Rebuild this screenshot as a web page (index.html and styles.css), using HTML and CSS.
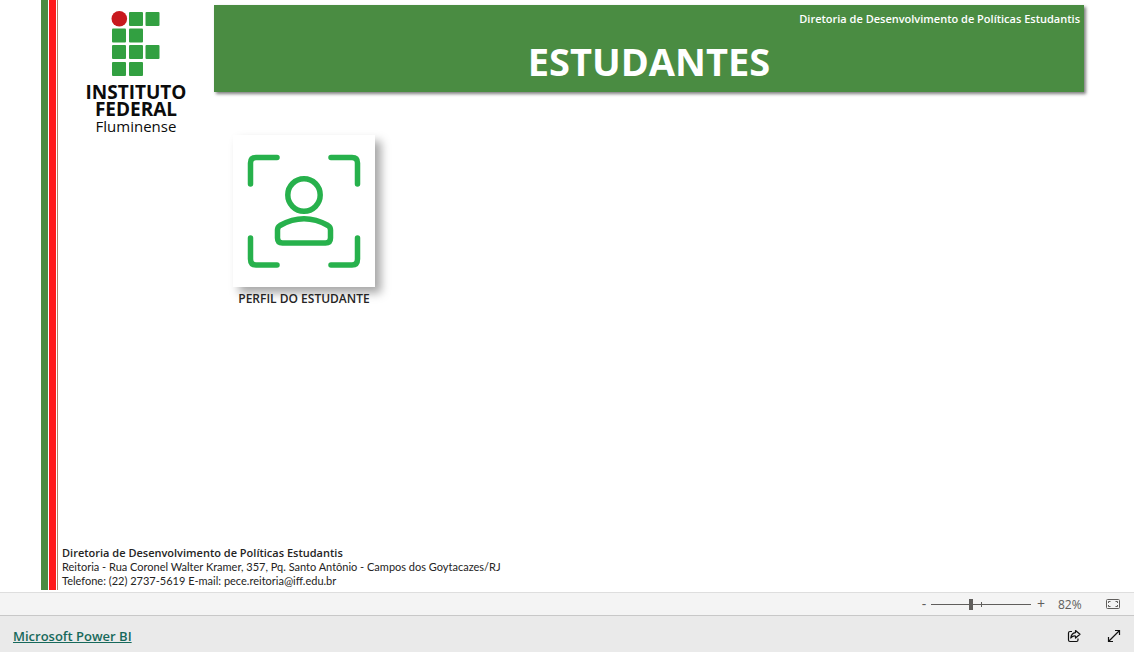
FILE: index.html
```html
<!DOCTYPE html>
<html lang="pt-BR">
<head>
<meta charset="utf-8">
<meta name="viewport" content="width=device-width, initial-scale=1">
<title>Estudantes</title>
<link rel="stylesheet" href="styles.css">
</head>
<body>
<main class="report">
  <div class="stripes"><span class="stripe-green"></span><span class="stripe-red"></span><span class="stripe-thin"></span></div>
  <div class="page">
    <div class="top">
      <div class="brand">
        <svg class="brand-mark" viewBox="0 0 50 67" aria-hidden="true">
          <g fill="#32a041">
            <rect x="18" y="1" width="14" height="14" rx="1"/><rect x="34.500" y="1" width="14" height="14" rx="1"/>
            <rect x="1" y="17.500" width="14" height="14" rx="1"/><rect x="18" y="17.500" width="14" height="14" rx="1"/>
            <rect x="1" y="34" width="14" height="14" rx="1"/><rect x="18" y="34" width="14" height="14" rx="1"/><rect x="34.500" y="34" width="14" height="14" rx="1"/>
            <rect x="1" y="51" width="14" height="14" rx="1"/><rect x="18" y="51" width="14" height="14" rx="1"/>
          </g>
          <circle cx="8.300" cy="7.800" r="7.800" fill="#c8191e"/>
        </svg>
        <strong class="brand-name">INSTITUTO<br>FEDERAL</strong>
        <span class="brand-campus">Fluminense</span>
      </div>
      <header class="banner">
        <p class="banner-unit">Diretoria de Desenvolvimento de Políticas Estudantis</p>
        <h1 class="banner-title">ESTUDANTES</h1>
      </header>
    </div>
    <nav class="tiles">
      <a class="tile" href="#perfil">
        <span class="tile-card">
          <svg class="tile-icon" viewBox="0 0 114 114" fill="none" stroke="#27b14c" stroke-width="5.500" stroke-linecap="round" stroke-linejoin="round" aria-hidden="true">
            <path d="M3.500 30V9Q3.500 3.500 9 3.500H30M84 3.500H105Q110.500 3.500 110.500 9V30M110.500 84V105Q110.500 111 105 111H84M30 111H9Q3.500 111 3.500 105V84"/>
            <circle cx="57" cy="41" r="16.200"/>
            <path d="M30.500 76Q30.500 73 33 71.500Q57 58 81 71.500Q83.500 73 83.500 76V84Q83.500 89 78.500 89H35.500Q30.500 89 30.500 84Z"/>
          </svg>
        </span>
        <span class="tile-label">PERFIL DO ESTUDANTE</span>
      </a>
    </nav>
    <address class="contact">
      <strong class="contact-unit">Diretoria de Desenvolvimento de Políticas Estudantis</strong>
      <span class="contact-line">Reitoria - Rua Coronel Walter Kramer, 357, Pq. Santo Antônio - Campos dos Goytacazes/RJ</span>
      <span class="contact-line">Telefone: (22) 2737-5619 E-mail: pece.reitoria@iff.edu.br</span>
    </address>
  </div>
</main>
<div class="zoombar">
  <button class="zoom-step" type="button" aria-label="Diminuir zoom">-</button>
  <input class="zoom-range" type="range" min="0" max="100" value="40" aria-label="Zoom">
  <button class="zoom-step" type="button" aria-label="Aumentar zoom">+</button>
  <span class="zoom-value">82%</span>
  <button class="fit" type="button" aria-label="Ajustar à página">
    <svg width="14" height="10" viewBox="0 0 14 10" fill="none" stroke="#605e5c" aria-hidden="true"><rect x=".5" y=".5" width="13" height="9" rx="1"/><path d="M2.500 4V2.500H4.500M9.500 2.500H11.500V4M11.500 6V7.500H9.500M4.500 7.500H2.500V6"/></svg>
  </button>
</div>
<footer class="footer">
  <a class="footer-link" href="#powerbi">Microsoft Power BI</a>
  <div class="footer-actions">
    <button class="action" type="button" aria-label="Compartilhar">
      <svg width="14" height="14" viewBox="0 0 14 14" fill="none" stroke="#111" stroke-width="1.200" stroke-linejoin="round" aria-hidden="true"><path d="M5 2.500H3Q1.500 2.500 1.500 4V11Q1.500 12.500 3 12.500H9.500Q11 12.500 11 11V9.500"/><path d="M8.500 1.500L13 5.300L8.500 9V7Q5.500 6.700 3.800 9Q4.300 4 8.500 3.600Z"/></svg>
    </button>
    <button class="action" type="button" aria-label="Tela inteira">
      <svg width="14" height="14" viewBox="0 0 14 14" fill="none" stroke="#111" stroke-width="1.200" aria-hidden="true"><path d="M1.500 12.500L12.500 1.500M8 1.500H12.500V6M1.500 8V12.500H6"/></svg>
    </button>
  </div>
</footer>
</body>
</html>
```
FILE: styles.css
```css
* { box-sizing: border-box; }
body {
  margin: 0;
  min-height: 100vh;
  display: flex;
  flex-direction: column;
  background: #fff;
  color: #252423;
  font-family: "Open Sans", "Noto Sans", sans-serif;
  font-size: 11px;
}
button { border: 0; padding: 0; background: none; color: inherit; font: inherit; }
button svg { display: block; }
.report { flex: 1; display: flex; padding: 0 50px 2px 41px; }
.stripes { display: flex; gap: 1px; }
.stripe-green { width: 7px; background: #4a8c42; }
.stripe-red { width: 7px; background: #ff1a1a; }
.stripe-thin { width: 1px; background: #b08568; }
.page { flex: 1; display: flex; flex-direction: column; padding-left: 4px; }
.top { display: flex; align-items: flex-start; }
.brand {
  width: 152px;
  padding: 11px 4px 0 0;
  display: flex;
  flex-direction: column;
  align-items: center;
  color: #0c0c0c;
}
.brand-mark { width: 50px; height: 67px; }
.brand-name { margin-top: 6px; font-size: 19px; line-height: 17px; text-align: center; }
.brand-campus { font-size: 15px; line-height: 17px; }
.banner {
  flex: 1;
  height: 87px;
  margin-top: 5px;
  padding: 5px 4px 0;
  background: #4a8c42;
  box-shadow: 2px 2px 3px rgba(0, 0, 0, .5);
  color: #fff;
}
.banner-unit { margin: 0; font-weight: 600; line-height: 18px; text-align: right; }
.banner-title { margin: 9px 0 0; font-size: 38px; line-height: 48px; font-weight: 700; text-align: center; }
.tiles { padding: 0 0 0 171px; display: flex; }
.tile { display: flex; flex-direction: column; align-items: center; color: inherit; text-decoration: none; }
.tile-card {
  padding: 19px 14px;
  background: #fff;
  box-shadow: 6px 6px 9px rgba(0, 0, 0, .35);
}
.tile-icon { display: block; width: 114px; height: 114px; }
.tile-label { margin-top: 3px; font-size: 12px; font-weight: 600; line-height: 18px; }
.contact { margin-top: auto; padding-bottom: 2px; font-family: Lato, sans-serif; font-style: normal; line-height: 14px; display: flex; flex-direction: column; }
.contact-unit { font-family: "Open Sans", sans-serif; font-weight: 600; }
.zoombar {
  height: 24px;
  padding: 0 14px;
  display: flex;
  align-items: center;
  justify-content: flex-end;
  background: #f4f4f4;
  border-top: 1px solid #dedede;
  border-bottom: 1px solid #c8c8c8;
  color: #605e5c;
}
.zoom-step { width: 14px; font-size: 14px; line-height: 20px; }
.zoom-range {
  width: 100px;
  height: 12px;
  margin: 0 3px 0 0;
  appearance: none;
  background:
    linear-gradient(#605e5c, #605e5c) 50px 50% / 1px 5px no-repeat,
    linear-gradient(#605e5c, #605e5c) 0 50% / 100% 1px no-repeat;
}
.zoom-range::-webkit-slider-thumb { appearance: none; width: 4px; height: 11px; background: #605e5c; }
.zoom-value { width: 30px; margin: 0 18px 0 10px; font-size: 12px; }
.footer {
  height: 36px;
  padding: 3px 13px 0;
  display: flex;
  align-items: center;
  justify-content: space-between;
  background: #eaeaea;
}
.footer-link { color: #17695b; font-size: 13px; font-weight: 600; }
.footer-actions { display: flex; gap: 26px; }
```
